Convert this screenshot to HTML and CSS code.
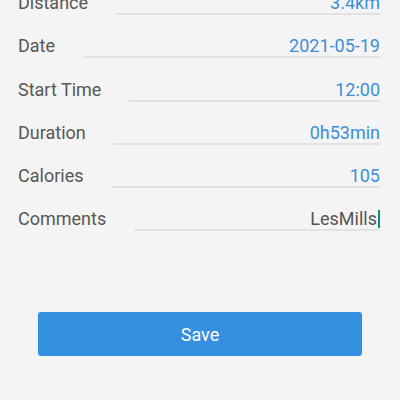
FILE: index.html
```html
<!DOCTYPE html>
<html lang="en">
  <head>
    <meta charset="UTF-8" />
    <meta name="viewport" content="width=device-width, initial-scale=1.0" />
    <title>Edit Workout</title>
    <link rel="stylesheet" href="styles.css">
  </head>
  <body>
    <div class="form">
      <div class="row">
        <span class="label">Distance</span>
        <div class="field">3.4km</div>
      </div>
      <div class="row">
        <span class="label">Date</span>
        <div class="field">2021-05-19</div>
      </div>
      <div class="row">
        <span class="label">Start Time</span>
        <div class="field">12:00</div>
      </div>
      <div class="row">
        <span class="label">Duration</span>
        <div class="field">0h53min</div>
      </div>
      <div class="row">
        <span class="label">Calories</span>
        <div class="field">105</div>
      </div>
      <div class="row">
        <span class="label">Comments</span>
        <div class="field editing">LesMills<span class="caret"></span></div>
      </div>
    </div>
    <button class="save-btn">Save</button>
  </body>
</html>
```

FILE: styles.css
```css
body {
  font-family: Roboto, "Noto Sans", sans-serif;
  background: #f4f4f4;
  margin: 0;
  padding: 0;
}

.form {
  margin-top: -28px;
  padding: 0 20px 0 18px;
}

.row {
  display: flex;
  align-items: flex-end;
  height: 43.2px;
}

.label {
  font-size: 18px;
  line-height: 20px;
  color: #575757;
  margin-right: 28px;
  padding-bottom: 2px;
  white-space: nowrap;
}

.field {
  flex: 1;
  font-size: 18px;
  line-height: 20px;
  text-align: right;
  color: #3d8fdc;
  border-bottom: 2px solid #e2e2e2;
}

.field.editing {
  color: #555;
}

.caret {
  display: inline-block;
  width: 2px;
  height: 18px;
  margin-left: 1px;
  vertical-align: -3px;
  background: #10897b;
}

.save-btn {
  display: block;
  width: 324px;
  height: 44px;
  margin: 81px 0 0 38px;
  border: none;
  border-radius: 3px;
  background-color: #348fe0;
  color: #fff;
  font-family: Roboto, "Noto Sans", sans-serif;
  font-size: 18px;
}
```
